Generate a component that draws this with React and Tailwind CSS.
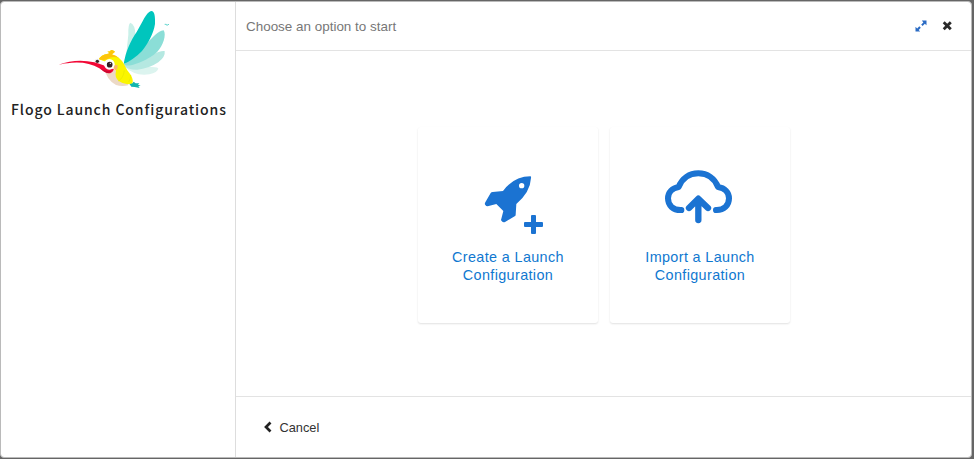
function HummingbirdLogo() {
  return (
    <svg className="ml-[49px] block h-[88px] w-[130px]" viewBox="0 15 390 264" aria-hidden="true">
      <path d="M222 190 Q232 150 235 104 Q234 72 241 68 Q256 74 256 104 Q252 148 222 190Z" fill="#c9f0e9" />
      <path d="M222 199 Q260 198 285 201 Q315 199 325 205 Q323 218 298 223 Q255 230 222 199Z" fill="#dcf4ef" />
      <path d="M222 197 Q270 173 305 165 Q331 151 344 153 Q347 170 325 187 Q295 207 262 209 Q235 210 222 197Z" fill="#b5e8e1" />
      <path d="M221 195 C250 160 265 148 292 128 C312 110 322 94 341 91 C350 104 339 138 322 155 C305 172 250 203 221 195Z" fill="#8bded7" />
      <path d="M221 192 C228 152 242 122 260 96 C278 66 288 38 303 33 C314 32 316 50 315 72 C311 100 295 130 276 153 C258 172 240 184 221 192Z" fill="#00c5bd" />
      <path d="M236 248 L247 250 L251 245 L257 250 L268 250 L264 254 L272 257 L265 259 L269 264 L254 261 L244 260Z" fill="#12b6ae" />
      <path d="M162 203 Q170 240 198 255 Q215 261 235 256 L210 218 L181 203Z" fill="#ecd9c6" />
      <path d="M146 178 Q152 165 174 161 Q181 161 172 154 Q182 156 182 151 Q187 148 195 155 Q190 160 185 163 Q209 170 222 192 Q229 209 243 226 Q251 242 247 250 Q228 258 206 243 Q193 231 198 213 L181 190Z" fill="#faf500" />
      <path d="M146 178 Q152 165 174 161 Q181 161 172 154 Q182 156 182 151 Q187 148 195 155 Q190 160 185 163 Q198 166 207 174 Q188 166 171 178 Q160 183 146 178Z" fill="#fdc50b" />
      <path d="M223 211 Q220 235 205 243 M242 225 Q243 235 236 246" fill="none" stroke="#e7e900" strokeWidth="2" />
      <path d="M191 196 L203 195 L202 208 L194 211Z" fill="#f9b46b" />
      <circle cx="142" cy="184" r="8" fill="#eee" />
      <circle cx="142" cy="184" r="5" fill="#3a2426" />
      <path d="M26 194 Q78 175 133 187 Q164 195 180 207 L192 206 Q188 220 174 220 Q162 217 148 205 Q113 184 65 188 Q40 190 26 194Z" fill="#f20735" />
      <path d="M151 205 Q165 216 184 212 Q180 220 171 219 Q160 216 151 205Z" fill="#cb0931" />
      <circle cx="178" cy="193" r="16" fill="#fff" />
      <circle cx="179" cy="194" r="8.5" fill="#342124" />
      <circle cx="181" cy="190" r="2" fill="#fff" />
      <path d="M344 73 L349 73 L350 76 M350 75 L354 75 L357 72" fill="none" stroke="#64d5ce" strokeWidth="3" />
    </svg>
  );
}

function RocketPlusIcon() {
  return (
    <svg className="block h-[80px] w-[90px]" viewBox="0 0 270 240" aria-hidden="true">
      <path
        fillRule="evenodd"
        fill="#1b73d2"
        d="M181 34 Q184 34 183 39 Q181 81 139 117 L137 149 Q137 152 134 154 L105 171 Q99 173 95 168 Q92 165 94 161 L100 138 L79 117 L53 124 Q48 124 46 120 Q43 116 46 112 L62 84 Q64 81 68 81 L99 78 Q132 34 181 34Z M155 54 a8 8 0 1 0 0 16 a8 8 0 1 0 0 -16Z"
      />
      <path
        fill="#1b73d2"
        d="M186 150h9q3 0 3 3v18h18q3 0 3 3v9q0 3-3 3h-18v18q0 3-3 3h-9q-3 0-3-3v-18h-18q-3 0-3-3v-9q0-3 3-3h18v-18q0-3 3-3z"
      />
    </svg>
  );
}

function CloudUploadIcon() {
  return (
    <svg className="block h-[75px] w-[100px]" viewBox="0 0 300 225" aria-hidden="true">
      <g fill="none" stroke="#1b73d2" strokeWidth="18" strokeLinecap="round" strokeLinejoin="round">
        <path d="M94 150 C69 151 54 136 54 115 C54 97 67 84 86 81 C96 55 118 40 145 40 C172 40 194 55 204 81 C224 84 237 97 237 115 C237 136 222 151 198 150" />
        <path strokeWidth="19" d="M145 180V118M117 144L145 116L174 144" />
      </g>
    </svg>
  );
}

function OptionCard({ icon, lines }) {
  return (
    <button className="flex h-[196px] w-[180px] flex-col items-center rounded-[3px] bg-white font-['Liberation_Sans',sans-serif] shadow-[0_1px_2px_rgba(0,0,0,0.12)]">
      <span className="flex h-[121px] w-full items-start justify-center">{icon}</span>
      <span className="text-[14.4px] leading-[18px] tracking-[0.36px] text-[#1078d0]">
        {lines.map((line) => (
          <span key={line} className="block whitespace-nowrap">{line}</span>
        ))}
      </span>
    </button>
  );
}

export default function App() {
  return (
    <div className="h-[459px] w-[974px] overflow-hidden bg-[#666] pr-[2px] pb-px pt-px font-['Liberation_Sans',sans-serif]">
      <div className="flex h-[457px] w-[972px] overflow-hidden rounded-[4px] border border-[#bababa] bg-white">
        <aside className="w-[235px] shrink-0 border-r border-[#ddd] pt-[3px]">
          <HummingbirdLogo />
          <h1 className="mt-[4px] ml-[10px] whitespace-nowrap font-['Noto_Sans_CJK_SC',sans-serif] text-[14px] leading-[24px] font-medium tracking-[0.9px] text-[#222]">
            Flogo Launch Configurations
          </h1>
        </aside>
        <section className="flex min-w-0 flex-1 flex-col">
          <header className="flex h-[49px] shrink-0 items-center justify-between border-b border-[#e3e3e3] pr-[19px] pl-[10px]">
            <span className="pt-[2px] text-[13.45px] text-[#777]">Choose an option to start</span>
            <span className="flex items-center gap-[15px]">
              <button aria-label="Expand">
                <svg className="block h-[12px] w-[12px]" viewBox="0 0 12 12">
                  <path d="M6.8 .5H11.5V5.2L9.8 3.8L7.6 6L6.2 4.6L8.4 2.4Z M.5 6.8V11.5H5.2L3.7 9.9L5.8 7.8L4.3 6.3L2.2 8.4Z" fill="#2a6bc4" />
                </svg>
              </button>
              <button aria-label="Close">
                <svg className="block h-[10px] w-[10px]" viewBox="0 0 10 10">
                  <path d="M2.7 2.2L7.8 7.3M7.8 2.2L2.7 7.3" stroke="#2a2a2a" strokeWidth="2.8" strokeLinecap="square" />
                </svg>
              </button>
            </span>
          </header>
          <main className="flex flex-1 items-start gap-[12px] pt-[76px] pl-[182px]">
            <OptionCard
              icon={<span className="mt-[38px] ml-[13px]"><RocketPlusIcon /></span>}
              lines={["Create a Launch", "Configuration"]}
            />
            <OptionCard
              icon={<span className="mt-[33px]"><CloudUploadIcon /></span>}
              lines={["Import a Launch", "Configuration"]}
            />
          </main>
          <footer className="flex h-[61px] shrink-0 items-center border-t border-[#e3e3e3] pl-[28px]">
            <button className="flex items-center gap-[7.5px] pt-px text-[12.8px] text-[#333]">
              <svg className="mb-px block h-[12px] w-[8px]" viewBox="0 0 8 12" aria-hidden="true">
                <path d="M6.5 1.5L2 6L6.5 10.5" fill="none" stroke="#222" strokeWidth="2.7" />
              </svg>
              Cancel
            </button>
          </footer>
        </section>
      </div>
    </div>
  );
}
